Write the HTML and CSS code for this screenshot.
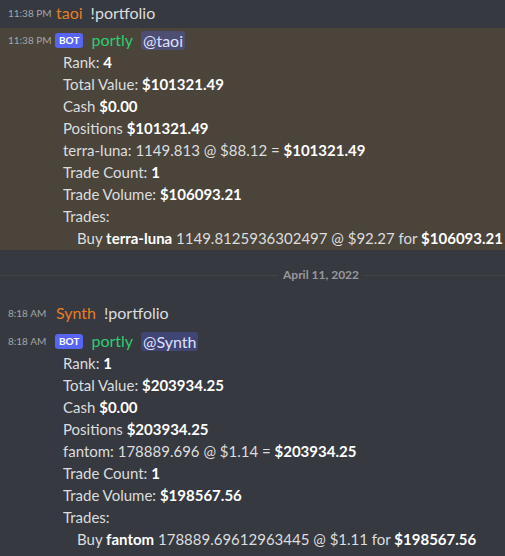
FILE: index.html
```html
<!DOCTYPE html>
<html lang="en">
<head>
  <meta charset="UTF-8">
  <meta name="viewport" content="width=device-width, initial-scale=1.0">
  <title>portly</title>
  <link rel="stylesheet" href="styles.css">
</head>
<body>
  <div class="chat">
    <div class="msg">
      <div class="head">
        <span class="time">11:38 PM</span>
        <span class="user user-orange">taoi</span>
        <span class="text">!portfolio</span>
      </div>
    </div>

    <div class="msg msg-mention">
      <div class="head">
        <span class="time">11:38 PM</span>
        <span class="bot-tag">BOT</span>
        <span class="user user-green">portly</span>
        <span class="mention">@taoi</span>
      </div>
      <div class="body">
        <div class="line">Rank: <b>4</b></div>
        <div class="line">Total Value: <b>$101321.49</b></div>
        <div class="line">Cash <b>$0.00</b></div>
        <div class="line">Positions <b>$101321.49</b></div>
        <div class="line">terra-luna: 1149.813 @ $88.12 = <b>$101321.49</b></div>
        <div class="line">Trade Count: <b>1</b></div>
        <div class="line">Trade Volume: <b>$106093.21</b></div>
        <div class="line">Trades:</div>
        <div class="line indent">Buy <b>terra-luna</b> 1149.8125936302497 @ $92.27 for <b>$106093.21</b></div>
      </div>
    </div>

    <div class="divider">
      <span class="divider-line"></span>
      <span class="divider-text">April 11, 2022</span>
      <span class="divider-line"></span>
    </div>

    <div class="msg">
      <div class="head">
        <span class="time">8:18 AM</span>
        <span class="user user-orange">Synth</span>
        <span class="text">!portfolio</span>
      </div>
    </div>

    <div class="msg">
      <div class="head">
        <span class="time">8:18 AM</span>
        <span class="bot-tag">BOT</span>
        <span class="user user-green">portly</span>
        <span class="mention">@Synth</span>
      </div>
      <div class="body">
        <div class="line">Rank: <b>1</b></div>
        <div class="line">Total Value: <b>$203934.25</b></div>
        <div class="line">Cash <b>$0.00</b></div>
        <div class="line">Positions <b>$203934.25</b></div>
        <div class="line">fantom: 178889.696 @ $1.14 = <b>$203934.25</b></div>
        <div class="line">Trade Count: <b>1</b></div>
        <div class="line">Trade Volume: <b>$198567.56</b></div>
        <div class="line">Trades:</div>
        <div class="line indent">Buy <b>fantom</b> 178889.69612963445 @ $1.11 for <b>$198567.56</b></div>
      </div>
    </div>
  </div>
</body>
</html>
```

FILE: styles.css
```css
body {
  margin: 0;
  background: #36393f;
  color: #dcddde;
  font-family: Lato, sans-serif;
  font-size: 15px;
  line-height: 22px;
}

.chat {
  display: flex;
  flex-direction: column;
  gap: 2px;
}

.msg {
  padding: 2px 0;
}

.msg-mention {
  background: #4a443b;
  padding: 1px 0;
}

.head {
  display: flex;
  align-items: center;
  height: 22px;
  white-space: nowrap;
}

.time {
  flex: 0 0 55px;
  min-width: 0;
  box-sizing: border-box;
  padding-left: 8px;
  font-size: 10px;
  color: #a3a6aa;
}

.user {
  font-size: 16px;
  margin-right: 8px;
}

.head > .user:nth-child(2) {
  margin-left: 1px;
}

.user-orange {
  color: #e67e22;
}

.user-green {
  color: #2ecc71;
}

.bot-tag {
  background: #5865f2;
  color: #fff;
  font-size: 10px;
  font-weight: 700;
  line-height: 15px;
  padding: 0 4px;
  border-radius: 3px;
  margin-right: 8px;
}

.mention {
  font-size: 16px;
  background: rgba(88, 101, 242, 0.3);
  color: #dee0fc;
  line-height: 19px;
  padding: 0 2px;
  border-radius: 3px;
}

.text {
  font-size: 16px;
}

.body {
  padding-left: 63px;
  white-space: nowrap;
}

.line b {
  color: #fff;
  font-weight: 700;
}

.indent {
  padding-left: 14px;
}

.divider {
  display: grid;
  grid-template-columns: 278px auto 1fr;
  align-items: center;
  gap: 5px;
  height: 46px;
}

.divider-line {
  height: 1px;
  background: #42454a;
}

.divider-text {
  font-size: 12px;
  font-weight: 700;
  color: #96989d;
}
```
